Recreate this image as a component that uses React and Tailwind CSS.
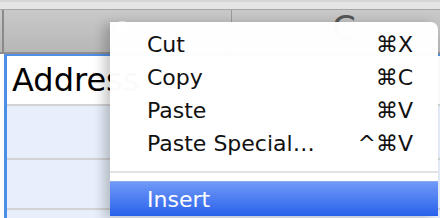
import React from "react";

const items = [
  { label: "Cut", key: "⌘X" },
  { label: "Copy", key: "⌘C" },
  { label: "Paste", key: "⌘V" },
  { label: "Paste Special…", key: "^⌘V" },
];

export default function App() {
  return (
    <div
      className="relative w-[440px] h-[218px] overflow-hidden bg-white"
      style={{ fontFamily: '"DejaVu Sans", "Liberation Sans", sans-serif' }}
    >
      {/* top strip */}
      <div className="h-[10px] bg-[#e4e4e4] border-t-2 border-b border-t-[#d6d6d6] border-b-[#a8a8a8]" />

      {/* column headers */}
      <div className="flex h-[44px] bg-gradient-to-b from-[#c9c9c9] to-[#b7b7b7] border-b-2 border-[#8f8f8f]">
        <div className="w-[4px] border-r-2 border-[#8a8a8a]" />
        <div className="w-[228px] pl-[112px] pt-[4px] border-r border-[#9a9a9a]">
          <span className="inline-block w-[12px] h-[10px] rounded-t-[5px] bg-[#ececec]" />
        </div>
        <div className="flex-1 pl-[100px] pt-[1px]">
          <span className="text-[34px] leading-none text-[#555]">C</span>
        </div>
      </div>

      {/* rows */}
      <div className="flex">
        <div className="w-[4px] bg-white" />
        <div className="flex-1 border-l-[3px] border-[#4d8fe6]">
          <div className="h-[50px] border-t-2 border-[#4d8fe6] bg-white pl-[5px] flex items-center">
            <span className="text-[32px] leading-none text-black">Address</span>
          </div>
          <div className="h-[54px] bg-[#e6effb] border-t-2 border-[#d3d3d3]" />
          <div className="h-[50px] bg-[#e6effb] border-t-2 border-[#d3d3d3]" />
          <div className="h-[20px] bg-[#e6effb] border-t-2 border-[#d3d3d3]" />
        </div>
      </div>

      {/* context menu */}
      <div className="absolute left-[110px] top-[22px] w-[328px] h-[194px] bg-white/[0.98] rounded-tr-[7px] shadow-[-6px_2px_12px_rgba(0,0,0,0.22)] pt-[6px]">
        {items.map((it) => (
          <div
            key={it.label}
            className="h-[33px] flex items-center justify-between pl-[37px] pr-[25px] text-[22px] text-[#111]"
          >
            <span>{it.label}</span>
            <span>{it.key}</span>
          </div>
        ))}
        <div className="mt-[11px] h-[2px] bg-[#e2e2e2]" />
        <div className="mt-[8px] h-[35px] flex items-center pl-[37px] text-[22px] text-white bg-gradient-to-b from-[#7098f7] to-[#2860ea] border-t border-[#8aa8f5]">
          Insert
        </div>
      </div>
    </div>
  );
}
